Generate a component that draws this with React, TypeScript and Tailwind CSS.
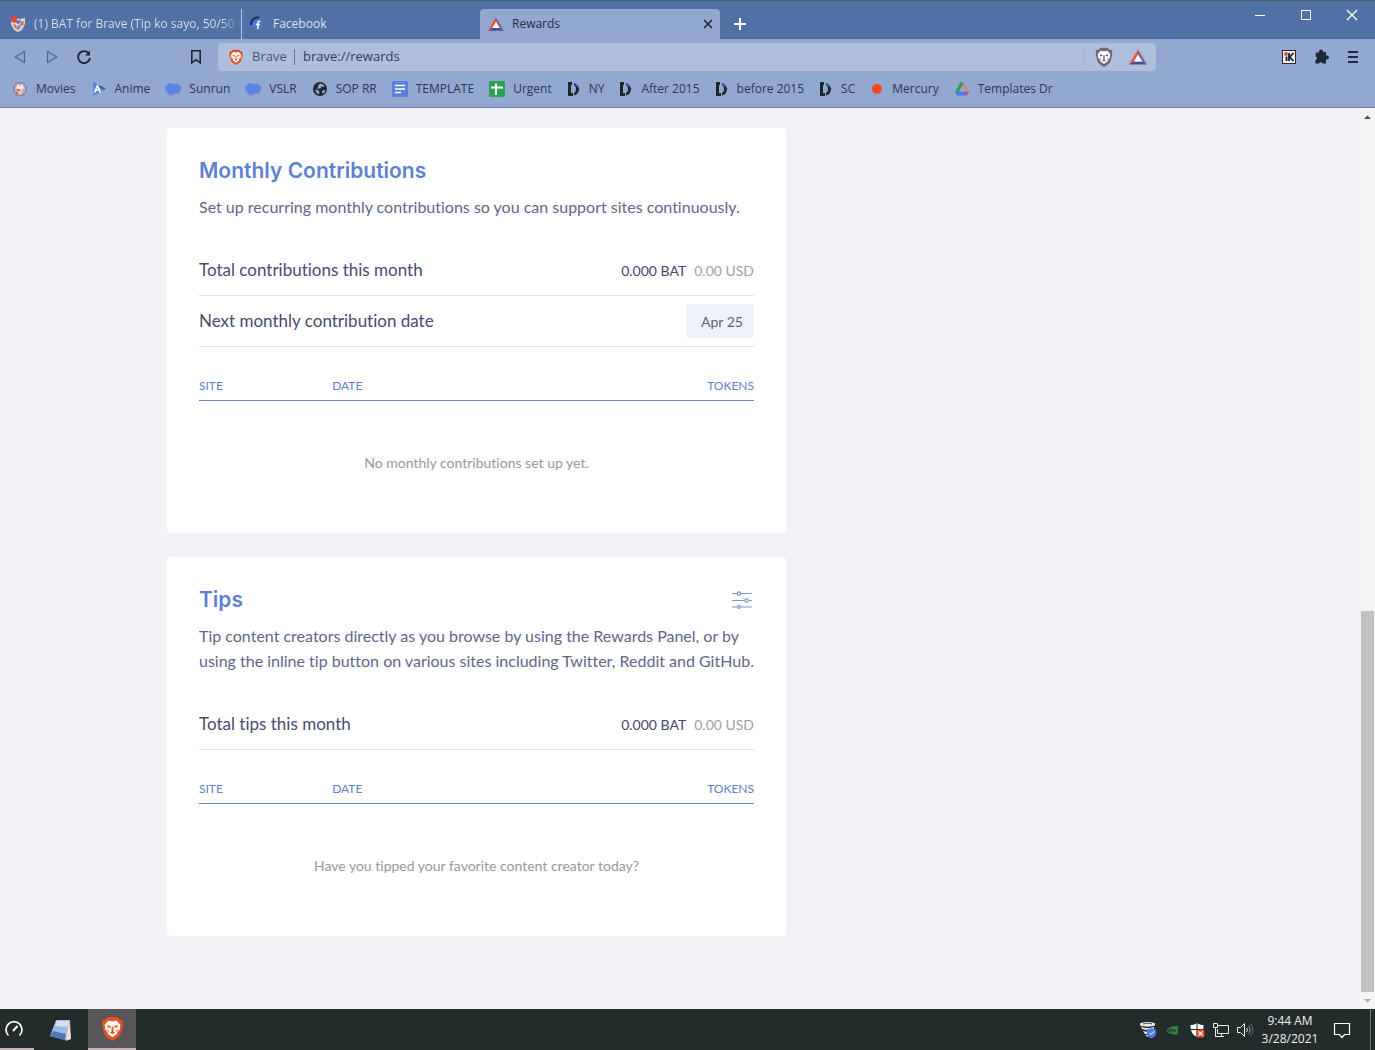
import type { ReactNode } from "react";

/* ---------- Icons ---------- */

function BraveLion({ size, shield, mane }: { size: number; shield: string; mane: string }) {
  return (
    <svg width={size} height={size} viewBox="0 0 24 24" aria-hidden="true">
      <path d="M7.500 1h9L19 3.500l2-.2 1 2.500-.5 2L22 9l-2.500 9-2 2.500L12 24l-5.500-3.500-2-2.500L2 9l.5-1.200-.5-2 1-2.500 2 .2z" fill={shield} />
      <path d="M8 4.500l4 .7 4-.7 3.500 4-.5 2.500.5 1.500-3 3 .3 1.300L12 20.500l-4.800-3.700.3-1.300-3-3L5 11l-.5-2.500z" fill={mane} />
      <path d="M6.800 8.800l3.500.9-.2 1.500-2.800-.4zM17.200 8.800l-3.500.9.2 1.500 2.800-.4z" fill={shield} />
      <path d="M11.300 10h1.400l.3 4-1 .8-1-.8zM9.500 15.800l2.500-1.300 2.500 1.300-2.500 1.700z" fill={shield} />
      <path d="M6.500 12.500l2 1.500-.5 1.500zM17.500 12.500l-2 1.500.5 1.500z" fill={shield} />
    </svg>
  );
}

function BatTriangle({ size }: { size: number }) {
  return (
    <svg width={size} height={size} viewBox="0 0 18 18" aria-hidden="true">
      <path d="M9 1.500L0 16.500l5-3L9 7z" fill="#ee5130" />
      <path d="M9 1.500l9 15-5-3L9 7z" fill="#7c6488" />
      <path d="M0 16.500h18l-5-3H5z" fill="#4a4a9c" />
      <path d="M9 6.500l4.200 7H4.800z" fill="#fff" />
    </svg>
  );
}

const MoviesIcon = () => (
  <svg width="16" height="16" viewBox="0 0 16 16" aria-hidden="true">
    <circle cx="8" cy="8" r="6.500" fill="#b9a9b8" stroke="#7b7390" />
    <path d="M4 7l2-4 2 2 2-2 2 4-1 1H5z" fill="#f3e7e4" />
    <path d="M5 8h6v3l-2 3H7l-2-2z" fill="#e9c4b4" />
    <path d="M5 9h3M5 11v2" stroke="#c4503c" strokeWidth="1.500" />
  </svg>
);

const AnimeIcon = () => (
  <svg width="16" height="16" viewBox="0 0 16 16" aria-hidden="true">
    <path d="M2 1l13 7L2 15z" fill="#5e83e0" />
    <path d="M2 1l13 7H11z" fill="#3d4f8c" />
    <path d="M3.500 11.500L6.500 4.500l3 7M4.800 9h3.500" fill="none" stroke="#fff" strokeWidth="1.600" />
  </svg>
);

const CloudIcon = () => (
  <svg width="16" height="16" viewBox="0 0 16 16" aria-hidden="true">
    <path d="M1.500 4.500L4 2.500l3 .5 2 .8 3-.8 3 2 1 3-1.500 3-3 1-2.500-.2L6.500 14 3 12.500 1.500 10 0 8z" fill="#5f83e2" stroke="#5f83e2" strokeLinejoin="round" />
  </svg>
);

const GlobeIcon = () => (
  <svg width="16" height="16" viewBox="0 0 16 16" aria-hidden="true">
    <circle cx="8" cy="8" r="7" fill="#20262e" />
    <path d="M6.500 3.500L9 2.500l3.500 2-1 1.500-2-.5-1 2H7l-1.500.5zM3 8.500l3 .5 1.500 2-.5 2-2-.5z" fill="#93a9d2" />
    <path d="M10.500 9l3 .5-1 2.500-2.500.5z" fill="#93a9d2" />
  </svg>
);

const DocsIcon = () => (
  <svg width="16" height="16" viewBox="0 0 16 16" aria-hidden="true">
    <rect width="16" height="16" rx="1" fill="#5c80d8" />
    <path d="M3 4.500h10M3 8h10M3 11.500h6" stroke="#fff" strokeWidth="1.600" />
  </svg>
);

const SheetsIcon = () => (
  <svg width="16" height="16" viewBox="0 0 16 16" aria-hidden="true">
    <rect width="16" height="16" rx="1" fill="#2da350" />
    <path d="M2 6.500h12M7 2.500V14" stroke="#fff" strokeWidth="1.800" />
  </svg>
);

const DIcon = () => (
  <svg width="14" height="16" viewBox="0 0 14 16" aria-hidden="true">
    <path d="M1 1h4v3H4v8h2v3H1z" fill="#1f272b" />
    <path d="M7 2c3 .5 5 3 5 6 0 3.500-2.500 6-5 6.500V12c1.200-.5 2-2 2-4s-.8-3.500-2-4z" fill="#1f272b" />
    <path d="M7 2l2.500 1L12 7 9.500 5z" fill="#5f83e2" />
  </svg>
);

const DotIcon = () => (
  <svg width="14" height="16" viewBox="0 0 14 16" aria-hidden="true">
    <circle cx="7" cy="8" r="5" fill="#f4481e" />
  </svg>
);

const DriveIcon = () => (
  <svg width="16" height="16" viewBox="0 0 16 16" aria-hidden="true">
    <path d="M6 1.500h4L4 12 1.500 10.500z" fill="#2f9b52" />
    <path d="M10 1.500l5 9-3 .5L8 5z" fill="#d98873" />
    <path d="M4 10.500h11l-2 4H3l-2-3.500z" fill="#5379e0" />
    <path d="M11.500 10.500H15l-2 4z" fill="#e5533a" />
  </svg>
);

const BatTabIcon = () => (
  <svg width="16" height="16" viewBox="0 0 16 16" aria-hidden="true">
    <path d="M1 3l4-1 5 1 5-1v6l-3 6-4 2-4-2-3-6z" fill="#d8d3dc" />
    <circle cx="4" cy="3.500" r="3.200" fill="#e5482c" />
    <path d="M3 8l3 1 1 4-2-1zM12 5l2 1-1 4-3-2z" fill="#e2653f" />
    <path d="M6 5l5-1-1 3-3 1z" fill="#4a6fc0" />
    <path d="M7 10l4-2-1 5-3 1z" fill="#9a8ba0" />
  </svg>
);

const FacebookTabIcon = () => (
  <svg width="16" height="16" viewBox="0 0 16 16" aria-hidden="true">
    <circle cx="8.500" cy="8.500" r="5.500" fill="#4a75d8" />
    <path d="M2 9a7 7 0 0 1 8-7.500" fill="none" stroke="#1f2a44" strokeWidth="2" />
    <path d="M9 13V6.800c0-1.200.8-1.600 2.200-1.400M6.800 8.500h4" fill="none" stroke="#fff" strokeWidth="1.500" />
  </svg>
);

const SlidersIcon = () => (
  <svg width="20" height="18" viewBox="0 0 20 18" fill="none" stroke="#7c97d0" strokeWidth="1.200" aria-hidden="true">
    <path d="M0 2.500h5M9 2.500h11M0 9.500h12.500M16.500 9.500H20M0 16h5M9 16h11" />
    <circle cx="7" cy="2.500" r="1.700" />
    <circle cx="14.500" cy="9.500" r="1.700" />
    <circle cx="7" cy="16" r="1.400" />
  </svg>
);

/* ---------- Browser chrome ---------- */

const BOOKMARKS: { label: string; icon: ReactNode }[] = [
  { label: "Movies", icon: <MoviesIcon /> },
  { label: "Anime", icon: <AnimeIcon /> },
  { label: "Sunrun", icon: <CloudIcon /> },
  { label: "VSLR", icon: <CloudIcon /> },
  { label: "SOP RR", icon: <GlobeIcon /> },
  { label: "TEMPLATE", icon: <DocsIcon /> },
  { label: "Urgent", icon: <SheetsIcon /> },
  { label: "NY", icon: <DIcon /> },
  { label: "After 2015", icon: <DIcon /> },
  { label: "before 2015", icon: <DIcon /> },
  { label: "SC", icon: <DIcon /> },
  { label: "Mercury", icon: <DotIcon /> },
  { label: "Templates Dr", icon: <DriveIcon /> },
];

function TabStrip() {
  return (
    <div className="flex h-[39px] border-t border-[#4d5a72] bg-[#5170a6] text-[#dde3ee]">
      <div role="tablist" className="flex items-end">
        <button role="tab" aria-selected="false" className="flex h-[30px] w-[242px] items-center gap-2 border-r border-[#b4c2dd] pl-[10px]">
          <BatTabIcon />
          <span className="flex-1 overflow-hidden bg-linear-to-r from-[#dde3ee] from-90% to-[#5170a6] bg-clip-text text-left whitespace-nowrap text-transparent">
            (1) BAT for Brave (Tip ko sayo, 50/50 t
          </span>
        </button>
        <button role="tab" aria-selected="false" className="flex h-[30px] w-[238px] items-center gap-2 pl-[7px]">
          <FacebookTabIcon />
          <span>Facebook</span>
        </button>
        <div className="flex h-[30px] w-[240px] items-center rounded-t bg-[#92a8d1] pr-[7px] pl-2 text-[#252d44]">
          <button role="tab" aria-selected="true" className="flex flex-1 items-center gap-2">
            <BatTriangle size={16} />
            <span>Rewards</span>
          </button>
          <button aria-label="Close tab">
            <svg width="10" height="10" viewBox="0 0 10 10" stroke="#1f2638" strokeWidth="1.600">
              <path d="M1 1l8 8M9 1L1 9" />
            </svg>
          </button>
        </div>
        <button aria-label="New tab" className="flex h-[30px] w-10 items-center justify-center">
          <svg width="12" height="12" viewBox="0 0 12 12" stroke="#fff" strokeWidth="2">
            <path d="M6 0v12M0 6h12" />
          </svg>
        </button>
      </div>
      <div className="ml-auto flex h-7">
        <button aria-label="Minimize" className="flex w-[46px] items-center justify-center">
          <svg width="10" height="10" viewBox="0 0 10 10" stroke="#fff"><path d="M0 5.500h10" /></svg>
        </button>
        <button aria-label="Maximize" className="flex w-[46px] items-center justify-center">
          <svg width="10" height="10" viewBox="0 0 10 10" stroke="#fff" fill="none"><path d="M.5.5h9v9h-9z" /></svg>
        </button>
        <button aria-label="Close" className="flex w-[46px] items-center justify-center">
          <svg width="12" height="12" viewBox="0 0 12 12" stroke="#fff" strokeWidth="1.200"><path d="M1 1l10 10M11 1L1 11" /></svg>
        </button>
      </div>
    </div>
  );
}

function Toolbar() {
  return (
    <div className="flex h-9 items-center">
      <div className="flex w-[218px] items-center px-[14px]">
        <button aria-label="Back">
          <svg width="12" height="14" viewBox="0 0 12 14" fill="none" stroke="#4a62a0" strokeWidth="1.200"><path d="M10.500 1.500v11L1.200 7z" strokeLinejoin="round" /></svg>
        </button>
        <button aria-label="Forward" className="ml-5">
          <svg width="12" height="14" viewBox="0 0 12 14" fill="none" stroke="#4a62a0" strokeWidth="1.200"><path d="M1.500 1.500v11L10.800 7z" strokeLinejoin="round" /></svg>
        </button>
        <button aria-label="Reload" className="ml-[18px]">
          <svg width="16" height="16" viewBox="0 0 16 16" fill="none" stroke="#1d2436" strokeWidth="1.800">
            <path d="M12.500 4A6 6 0 1 0 14 9" />
            <path d="M14 1.500v5H9z" fill="#1d2436" stroke="none" />
          </svg>
        </button>
        <button aria-label="Bookmark this page" className="ml-auto">
          <svg width="16" height="16" viewBox="0 0 16 16" fill="none" stroke="#1d2436" strokeWidth="1.600"><path d="M3.800 1.800h8.400v12L8 10.800l-4.200 3z" /></svg>
        </button>
      </div>
      <div className="flex h-7 flex-1 items-center rounded bg-[#aebfdc] pr-[9px] pl-[10px] text-[13px]">
        <BraveLion size={16} shield="#e8532c" mane="#fff" />
        <span className="ml-2 w-[34px] text-[#4a5678]">Brave</span>
        <span className="mx-2 h-4 w-px bg-[#66759a]" />
        <input aria-label="Address" defaultValue="brave://rewards" className="min-w-0 flex-1 bg-transparent text-[#323c58] outline-none" />
        <span className="h-4 border-l border-dotted border-[#a59eae]" />
        <button aria-label="Brave Shields" className="ml-[9px]">
          <BraveLion size={20} shield="#74657c" mane="#fff" />
        </button>
        <button aria-label="Brave Rewards" className="ml-[15px]">
          <BatTriangle size={18} />
        </button>
      </div>
      <div className="flex w-[219px] items-center justify-end gap-4 pr-[14px]">
        <button aria-label="Extension">
          <svg width="16" height="16" viewBox="0 0 16 16">
            <rect x="1.500" y="1.500" width="13" height="13" fill="#f1efec" stroke="#232a33" />
            <path d="M5.500 7.500v4.500M8 4v8M12.500 4L8.800 8l3.700 4" stroke="#1d2026" strokeWidth="1.800" fill="none" />
            <circle cx="5" cy="5" r="1.900" fill="#e2532f" />
          </svg>
        </button>
        <button aria-label="Extensions">
          <svg width="16" height="16" viewBox="0 0 16 16" fill="#1f273c">
            <path d="M3 3.500h3A2 2 0 0 1 9.800 3H13v3.500a2 2 0 0 1 0 3.800V14.500H9.500a2 2 0 0 0-3.600 0H2.500v-3.500a2 2 0 0 0 0-3.800z" />
            <circle cx="8" cy="2.500" r="2" />
            <circle cx="14" cy="8.500" r="2" />
          </svg>
        </button>
        <button aria-label="Menu">
          <svg width="16" height="14" viewBox="0 0 16 14" stroke="#1f273c" strokeWidth="1.800"><path d="M3 2h10M3 7h10M3 12h10" /></svg>
        </button>
      </div>
    </div>
  );
}

function BookmarksBar() {
  return (
    <nav aria-label="Bookmarks" className="flex h-[33px] items-center gap-[15px] border-b border-[#747ba5] pb-1 pl-3 text-[#2c3655]">
      {BOOKMARKS.map((b) => (
        <a key={b.label} href="#" className="flex items-center gap-2 whitespace-nowrap">
          {b.icon}
          {b.label}
        </a>
      ))}
    </nav>
  );
}

/* ---------- Rewards page ---------- */

interface RewardsCardProps {
  title: string;
  description: string;
  empty: string;
  action?: ReactNode;
  children: ReactNode;
}

function RewardsCard({ title, description, empty, action, children }: RewardsCardProps) {
  return (
    <section className="rounded bg-white px-8 pt-7">
      <div className="flex items-center justify-between">
        <h2 className="font-['Inter',sans-serif] text-[21px] leading-[30px] font-semibold text-[#5f81d2]">{title}</h2>
        {action}
      </div>
      <p className="mt-2 leading-[25px] text-[#62668a]">{description}</p>
      <div className="mt-[26px]">{children}</div>
      <table className="mt-6 w-full table-fixed border-separate border-spacing-0">
        <thead>
          <tr className="text-left text-[12px] leading-[29px] text-[#5f81c8]">
            <th className="w-[24%] border-b border-[#6a87c4] p-0 font-normal">SITE</th>
            <th className="border-b border-[#6a87c4] p-0 font-normal">DATE</th>
            <th className="border-b border-[#6a87c4] p-0 text-right font-normal">TOKENS</th>
          </tr>
        </thead>
        <tbody>
          <tr>
            <td colSpan={3} className="px-0 pt-[50px] pb-[58px] text-center text-[14px] leading-6 text-[#97979f]">
              {empty}
            </td>
          </tr>
        </tbody>
      </table>
    </section>
  );
}

function SummaryRow({ label, children }: { label: string; children: ReactNode }) {
  return (
    <div className="flex h-[51px] items-center justify-between border-b border-[#e3e3e6]">
      <span className="text-[17px] text-[#484c70]">{label}</span>
      {children}
    </div>
  );
}

function Amount() {
  return (
    <span className="flex gap-2 text-[14px]">
      <span className="text-[#45486a]">0.000 BAT</span>
      <span className="text-[#a3a0a6]">0.00 USD</span>
    </span>
  );
}

function Scrollbar() {
  return (
    <div className="flex w-[15px] flex-col items-center bg-[#f4f4f5] pt-[6px] pb-1" aria-hidden="true">
      <svg width="7" height="6" viewBox="0 0 7 6"><path d="M0 5L3.500 1.500 7 5z" fill="#505050" /></svg>
      <div className="mt-auto mb-1 h-[381px] w-[13px] bg-[#c1c1c1]" />
      <svg width="7" height="9" viewBox="0 0 7 9"><path d="M0 3l3.500 3.500L7 3z" fill="#a3a3a3" /></svg>
    </div>
  );
}

/* ---------- Taskbar ---------- */

function Taskbar() {
  return (
    <footer className="flex h-[41px] bg-[#232b2b] text-[#eef0f0]">
      <button aria-label="Speed test" className="flex w-[34px] items-center border-b-2 border-[#c4b6b6] pl-1">
        <svg width="20" height="20" viewBox="0 0 20 20" fill="none" stroke="#fff" strokeWidth="1.700">
          <path d="M4.500 16.500a8 8 0 1 1 11 0" />
          <path d="M9 12l4.500-5" strokeWidth="2" />
        </svg>
      </button>
      <button aria-label="Notepad" className="flex w-[54px] items-center justify-center">
        <svg width="24" height="24" viewBox="0 0 24 24">
          <path d="M7 2h14l1 19-5 2z" fill="#c9b7b0" />
          <path d="M7 2h13l-4 20L1 18z" fill="#9dbbe3" />
          <path d="M8 3h12l-1.500 6L6 8z" fill="#d3e0f2" />
          <path d="M4 13l13 3-1 6L1 18z" fill="#5378b8" />
          <path d="M20 3l2 18-5 1z" fill="#eae3df" />
        </svg>
      </button>
      <button aria-label="Brave" className="flex w-12 items-center justify-center border-b-2 border-[#c4b6b6] bg-[#57575a]">
        <BraveLion size={25} shield="#f0501f" mane="#fff" />
      </button>

      <div className="ml-auto flex items-center gap-2">
        <svg width="18" height="18" viewBox="0 0 18 18" aria-hidden="true">
          <path d="M1 2.500c4-2 11-2 15 0v2c-4 1.500-11 1.500-15 0zM2 6c4 1.500 9 1.500 13 0v2c-3 1.500-8 1.500-12 0zM4 10c3 1 5 1 8 0l-1 3H6zM6 14h4l-1 2z" fill="#eceaf0" />
          <path d="M4 3c3-1 7-1 9 0" stroke="#404752" fill="none" />
          <path d="M8 8.500l4.500-1.500L17 8.500v4c0 2-2 4-4.500 5C10 16.500 8 14.500 8 12.500z" fill="#4b7fe0" />
          <path d="M10.500 12l1.500 1.500 3-3" stroke="#fff" fill="none" />
        </svg>
        <svg width="16" height="16" viewBox="0 0 16 16" fill="none" stroke="#38a558" aria-hidden="true">
          <path d="M7 4h6v8.500H7z" fill="#2b8046" stroke="none" />
          <path d="M2 8.500C4 5 9 4.500 12 8.500 9 12.500 4 12 2 8.500z" fill="#232b2b" />
          <path d="M4.500 8.500c1-2 4-2 5 0-1 2-4 2-5 0z" />
        </svg>
        <svg width="16" height="16" viewBox="0 0 16 16" aria-hidden="true">
          <path d="M8 1c2 1.500 4 2 6.500 2 0 6-1.500 9.500-6.500 12C3 12.500 1.500 9 1.500 3 4 3 6 2.500 8 1z" fill="#fff" />
          <path d="M8 1v14M1 7.500h14" stroke="#232b2b" />
          <rect x="7.500" y="7.500" width="8" height="8" rx="1.500" fill="#dc4b32" />
          <path d="M9.500 9.500l4 4M13.500 9.500l-4 4" stroke="#fff" strokeWidth="1.200" />
        </svg>
        <svg width="16" height="16" viewBox="0 0 16 16" fill="none" stroke="#e9eeee" aria-hidden="true">
          <path d="M5 3.500h10.500v8H4.500V7M.5 1.500h4v4h-4zM2.500 6v8.500M2 14.500h9M8.500 11.500v3" />
        </svg>
        <svg width="17" height="16" viewBox="0 0 17 16" fill="none" stroke="#e9eeee" aria-hidden="true">
          <path d="M.5 5.500h3l4-4v13l-4-4h-3z" />
          <path d="M9.500 6c1 1 1 3 0 4" />
          <path d="M11.500 4c2 2 2 6 0 8" stroke="#9aa1a1" />
          <path d="M13.500 2c3 3 3 9 0 12" stroke="#687070" />
        </svg>
        <div className="flex w-14 flex-col items-center leading-[18px] whitespace-nowrap">
          <span>9:44 AM</span>
          <span>3/28/2021</span>
        </div>
        <button aria-label="Notifications" className="flex w-9 items-center justify-center pr-1">
          <svg width="18" height="18" viewBox="0 0 18 18" fill="none" stroke="#fff" strokeWidth="1.200">
            <path d="M1.500 2.500h15v11h-5L9 16.500l-2.500-3h-5z" />
          </svg>
        </button>
        <span className="mr-1 h-[41px] w-px bg-[#71787a]" />
      </div>
    </footer>
  );
}

export default function App() {
  return (
    <div className="flex min-h-screen flex-col bg-[#f1f2f6] font-['Open_Sans',sans-serif] text-[12px]">
      <header className="bg-[#92a8d1]">
        <TabStrip />
        <Toolbar />
        <BookmarksBar />
      </header>

      <div className="flex flex-1">
        <main className="flex-1 pt-5 pb-[72px] font-['Lato',sans-serif] text-[16px] [font-variant-ligatures:none]">
          <div className="mx-auto max-w-[1026px]">
            <div className="flex max-w-[619px] flex-col gap-6">
              <RewardsCard
                title="Monthly Contributions"
                description="Set up recurring monthly contributions so you can support sites continuously."
                empty="No monthly contributions set up yet."
              >
                <SummaryRow label="Total contributions this month">
                  <Amount />
                </SummaryRow>
                <SummaryRow label="Next monthly contribution date">
                  <span className="flex h-[34px] w-[68px] items-center justify-center rounded bg-[#edf2fa] pl-1 text-[14px] text-[#5d6180]">
                    Apr 25
                  </span>
                </SummaryRow>
              </RewardsCard>

              <RewardsCard
                title="Tips"
                description="Tip content creators directly as you browse by using the Rewards Panel, or by using the inline tip button on various sites including Twitter, Reddit and GitHub."
                empty="Have you tipped your favorite content creator today?"
                action={
                  <button aria-label="Tip settings" className="mr-[2px]">
                    <SlidersIcon />
                  </button>
                }
              >
                <SummaryRow label="Total tips this month">
                  <Amount />
                </SummaryRow>
              </RewardsCard>
            </div>
          </div>
        </main>
        <Scrollbar />
      </div>

      <Taskbar />
    </div>
  );
}
